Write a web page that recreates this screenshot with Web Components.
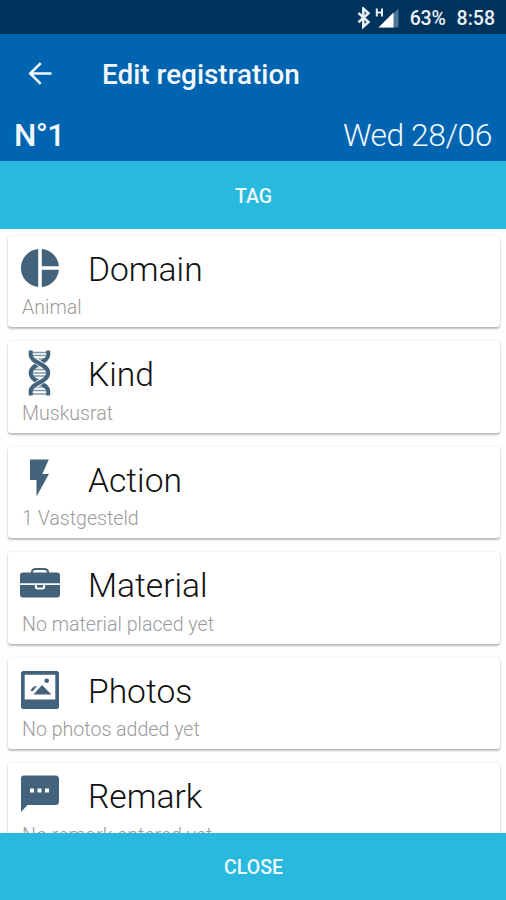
<!DOCTYPE html>
<html lang="en">
<head>
<meta charset="utf-8">
<title>Edit registration</title>
<style>
html,body{margin:0;height:100%;overflow:hidden;background:#fff;font-family:Roboto,"Liberation Sans",sans-serif}
</style>
</head>
<body>
<registration-screen></registration-screen>
<script>
const ICONS = {
  pie: '<path d="M18.200 13.080v37.840A19 19 0 0 1 18.200 13.080zM21.800 13.080A19 19 0 0 1 38.900 30.300H21.800zM21.800 33.700H38.900A19 19 0 0 1 21.800 50.920z"/>',
  dna: '<g fill="none" stroke="#42637b"><path stroke="#7f98a9" stroke-width="1.300" d="M10 11.500h18M12 14.500h15M16 18h8M15 25.500h9M12 28.500h15M11 32h17M12 35h15M15 38.500h9M16 46h8M12 49.500h15M10 53h18"/><path stroke-width="4" d="M28.200 9.500v4.500c0 8-17.500 8.500-17.500 18s17.500 10 17.500 18v4.500"/><path stroke="#fff" stroke-width="6" d="M15.500 19.500c3 2.500 6 4 8.500 6M24 38.500c-2.500 2-6 3.500-8.500 6"/><path stroke-width="4" d="M10.700 9.500v4.500c0 8 17.500 8.500 17.500 18s-17.500 10-17.500 18v4.500"/></g>',
  bolt: '<path d="M10 12.500h18.800l-6.500 14.500h6.600L16.500 49.500V33H10z"/>',
  bag: '<path d="M3 20.500h34a3 3 0 0 1 3 3v7.700H0v-7.700a3 3 0 0 1 3-3zM0 33h14.800v1.500a3 3 0 0 0 3 3h4.400a3 3 0 0 0 3-3V33H40v9.500a3 3 0 0 1-3 3H3a3 3 0 0 1-3-3z"/><path d="M17 33h6v2.600h-6z"/><path d="M11.800 21c0-2.800 1.800-4 4.200-4h8c2.400 0 4.200 1.200 4.200 4" fill="none" stroke="#42637b" stroke-width="2"/>',
  photo: '<path fill-rule="evenodd" d="M3.500 13h33a2.500 2.500 0 0 1 2.500 2.500v33a2.500 2.500 0 0 1-2.500 2.500h-33A2.500 2.500 0 0 1 1 48.500V15.500a2.500 2.500 0 0 1 2.500-2.500zM4.700 16.800v24.700h30.600V16.800z"/><path d="M13.500 36.500l8.500-9.500 9.500 9.500zM10.500 33c1-3 3.500-5.500 6.500-5l-4 5z"/><circle cx="26.700" cy="22.800" r="2.300"/>',
  chat: '<path fill-rule="evenodd" d="M4 12.500h31.500a3.500 3.500 0 0 1 3.500 3.500v22.500a3.500 3.500 0 0 1-3.500 3.500H7.500L1 49V15.500a3 3 0 0 1 3-3zM10 25.500v4h4v-4zM17.500 25.500v4h4v-4zM25 25.500v4h4v-4z"/>'
};

class StatusBar extends HTMLElement {
  constructor(){ super(); this.attachShadow({mode:'open'}).innerHTML = `
  <style>
  :host{display:flex;box-sizing:border-box;height:34px;background:#00335b;color:#e9eff5;align-items:center;justify-content:flex-end;padding:3px 11px 0 0;font-weight:500;font-size:19.500px;line-height:34px}
  svg{display:block;margin-right:11px}.p{margin-right:11px;letter-spacing:-.2px}
  .p,.t{white-space:nowrap}
  </style>
  <svg width="43" height="24" viewBox="0 0 43 24" fill="none"><path d="M2.500 6l10 9-5.200 4.700V1.500L12.500 6.200l-10 9" stroke="#e9eff5" stroke-width="2.500"/><path d="M20.800 1.500v8M26 1.500v8M20.800 5.500H26" stroke="#e9eff5" stroke-width="2"/><path d="M42.500 1.500V20.500H23z" fill="#4f7594"/><path d="M37.500 5.500V20.500H22.500z" fill="#fff"/></svg>
  <span class="p">63%</span><span class="t">8:58</span>`; }
}
customElements.define('status-bar', StatusBar);

class AppHeader extends HTMLElement {
  constructor(){ super(); this.attachShadow({mode:'open'}).innerHTML = `
  <style>
  :host{display:block;box-sizing:border-box;height:127px;background:#0064b0;color:#f2f7fc}
  .bar{display:flex;align-items:center;height:80px;padding-left:28px}
  svg{display:block;margin-right:50px}
  .title{font-weight:500;font-size:27.900px;white-space:nowrap}
  .info{display:flex;align-items:center;justify-content:space-between;height:42px;padding:0 14px 0 14px}
  .no{font-weight:500;font-size:31.500px;letter-spacing:-.6px}.date{font-weight:300;font-size:31.800px;letter-spacing:-.45px}
  </style>
  <div class="bar"><svg width="24" height="24" viewBox="0 0 24 24" fill="none" stroke="#f2f7fc" stroke-width="2.600"><path d="M23.500 11.500H2.500M12.700 1.200L2.300 11.500l10.400 10.300"/></svg><span class="title"><slot name="title"></slot></span></div>
  <div class="info"><span class="no"><slot name="number"></slot></span><span class="date"><slot name="date"></slot></span></div>`; }
}
customElements.define('app-header', AppHeader);

class ActionBar extends HTMLElement {
  constructor(){ super(); this.attachShadow({mode:'open'}).innerHTML = `
  <style>
  :host{display:flex;flex:none;height:67.500px;box-sizing:border-box;align-items:center;justify-content:center;background:#29b9df;color:#eefaff;font-size:19.500px;font-weight:500;padding:3px 0 0 1px}
  </style><slot></slot>`; }
}
customElements.define('action-bar', ActionBar);

class RegistrationCard extends HTMLElement {
  constructor(){ super(); this.attachShadow({mode:'open'}); }
  connectedCallback(){ this.shadowRoot.innerHTML = `
  <style>
  :host{display:block;flex:none;box-sizing:border-box;height:91.500px;padding:0 12px;background:#fff;border-radius:3px;box-shadow:0 2px 2px rgba(0,0,0,.24),0 0 2px rgba(0,0,0,.16)}
  .head{display:flex;height:58.500px}
  svg{display:block;flex:none;width:40px;height:56px;fill:#42637b;overflow:visible}
  .title{margin-left:28px;line-height:67.500px;font-size:33.600px;font-weight:300;color:#111;white-space:nowrap}
  .sub{padding-left:2px;font-size:19.600px;font-weight:300;line-height:27px;color:#9b9b9b;white-space:nowrap}
  </style>
  <div class="head"><svg viewBox="0 0 40 56">${ICONS[this.getAttribute('icon')]}</svg><span class="title"><slot name="title"></slot></span></div>
  <div class="sub"><slot></slot></div>`; }
}
customElements.define('registration-card', RegistrationCard);

class RegistrationScreen extends HTMLElement {
  constructor(){ super();
    const cards = [['pie','Domain','Animal'],['dna','Kind','Muskusrat'],['bolt','Action','1 Vastgesteld'],['bag','Material','No material placed yet'],['photo','Photos','No photos added yet'],['chat','Remark','No remark entered yet']];
    this.attachShadow({mode:'open'}).innerHTML = `
  <style>
  :host{display:flex;flex-direction:column;width:506px;height:900px;overflow:hidden;background:#fefefe}
  main{flex:1;min-height:0;overflow:hidden;display:flex;flex-direction:column;gap:14px;padding:7.400px 6px 0 8px}
  status-bar,app-header{flex:none}
  </style>
  <status-bar></status-bar>
  <app-header><span slot="title">Edit registration</span><span slot="number">N°1</span><span slot="date">Wed 28/06</span></app-header>
  <action-bar>TAG</action-bar>
  <main>${cards.map(c=>`<registration-card icon="${c[0]}"><span slot="title">${c[1]}</span>${c[2]}</registration-card>`).join('')}</main>
  <action-bar>CLOSE</action-bar>`; }
}
customElements.define('registration-screen', RegistrationScreen);
</script>
</body>
</html>
